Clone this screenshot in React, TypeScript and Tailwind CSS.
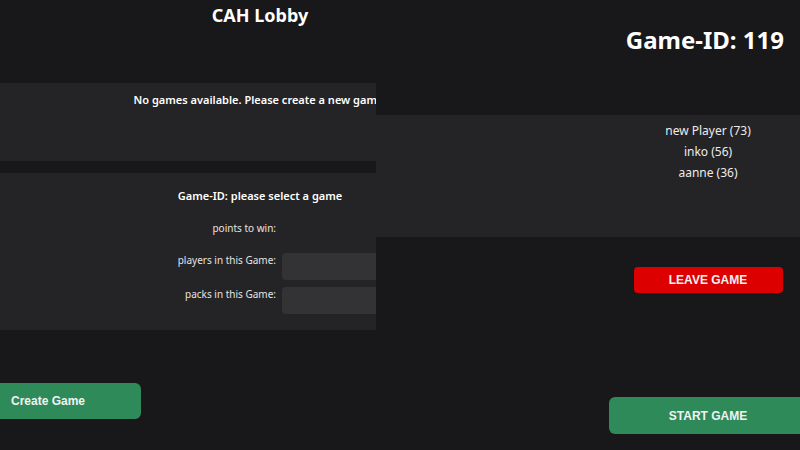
const players = ["new Player (73)", "inko (56)", "aanne (36)"];

function FieldRow({ label, box, className }: { label: string; box?: boolean; className?: string }) {
  return (
    <div className={`flex h-[27px] ${className ?? ""}`}>
      <span className="w-[276px] text-right text-[10px] leading-[14px] text-[#e4e4e4]">{label}</span>
      {box ? <div className="ml-[6px] h-[27px] w-[220px] rounded-[4px] bg-[#333235]" /> : null}
    </div>
  );
}

export default function App() {
  return (
    <div
      className="flex h-[450px] w-[800px] overflow-hidden bg-[#18171a] text-white"
      style={{ fontFamily: '"Noto Sans", "Open Sans", sans-serif' }}
    >
      {/* lobby page, cut off by the sliding game page */}
      <div className="w-[376px] shrink-0 overflow-hidden">
        <div className="flex w-[520px] flex-col">
          <h1 className="pt-[3px] text-center text-[18px] font-bold leading-[24px]">CAH Lobby</h1>

          <div className="mt-[56px] h-[78px] bg-[#242326] pt-[8px] text-center text-[11px] font-semibold leading-[18px]">
            No games available. Please create a new game.
          </div>

          <div className="mt-[12px] flex h-[157px] flex-col bg-[#242326]">
            <p className="pt-[14px] text-center text-[11px] font-semibold leading-[18px]">
              Game-ID: please select a game
            </p>
            <FieldRow label="points to win:" className="mt-[16px]" />
            <FieldRow label="players in this Game:" box className="mt-[5px]" />
            <FieldRow label="packs in this Game:" box className="mt-[7px]" />
          </div>

          <button
            type="button"
            className="mt-[53px] h-[36px] w-[141px] rounded-r-[6px] bg-[#2e8a58] pl-[11px] text-left text-[12px] font-bold text-[#f2f2f2]"
            style={{ fontFamily: '"Liberation Sans", Arial, sans-serif' }}
          >
            Create Game
          </button>
        </div>
      </div>

      {/* game page */}
      <div className="flex flex-1 flex-col overflow-hidden">
        <h2 className="pr-[16px] pt-[24px] text-right text-[24px] font-bold leading-[32px]">Game-ID: 119</h2>

        <div className="mt-[59px] flex h-[122px] bg-[#242326]">
          <div className="w-[240px]" />
          <ul className="w-[184px] pt-[5px] text-center text-[12px] leading-[21px] text-[#ececec]">
            {players.map((p) => (
              <li key={p}>{p}</li>
            ))}
          </ul>
        </div>

        <div className="flex" style={{ fontFamily: '"Liberation Sans", Arial, sans-serif' }}>
          <div className="w-[240px]" />
          <div className="flex w-[184px] flex-col">
            <button
              type="button"
              className="mx-auto mt-[30px] h-[26px] w-[149px] rounded-[4px] bg-[#dd0000] text-[12px] font-bold text-[#f2f2f2]"
            >
              LEAVE GAME
            </button>
          </div>
        </div>

        <button
          type="button"
          className="ml-[233px] mt-[104px] h-[37px] w-[198px] shrink-0 rounded-l-[6px] bg-[#2e8a58] text-[12px] font-bold text-[#f2f2f2]"
          style={{ fontFamily: '"Liberation Sans", Arial, sans-serif' }}
        >
          START GAME
        </button>
      </div>
    </div>
  );
}
